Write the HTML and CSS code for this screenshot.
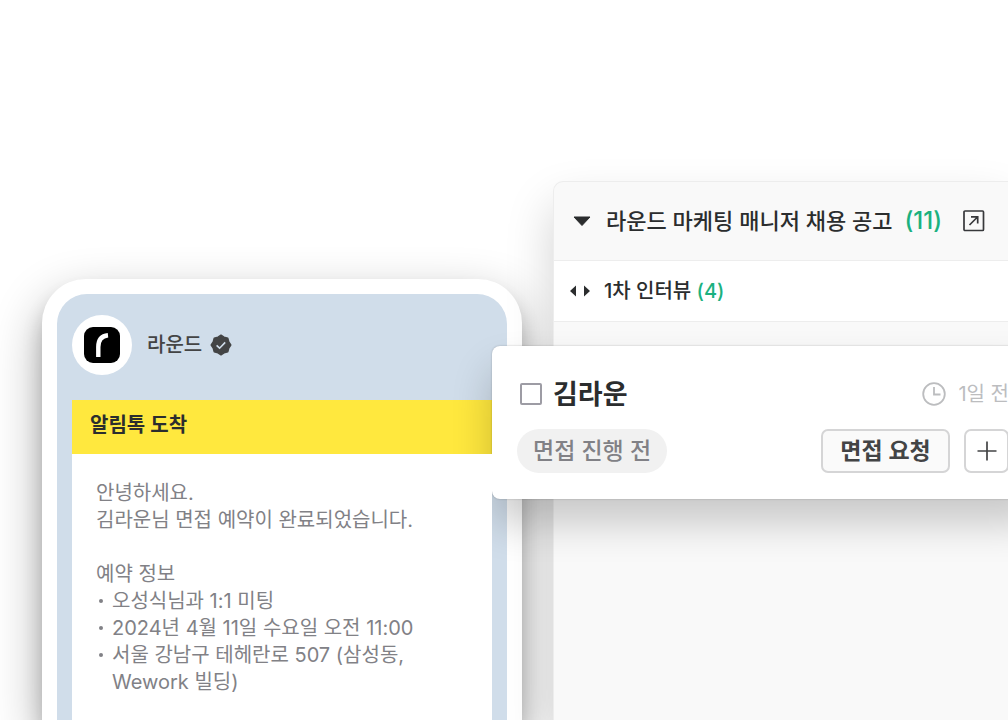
FILE: index.html
```
<!DOCTYPE html>
<html lang="ko">
<head>
  <meta charset="UTF-8" />
  <meta name="viewport" content="width=device-width, initial-scale=1.0" />
  <title>라운드</title>
  <link rel="stylesheet" href="styles.css">
</head>
<body>
  <main class="hero">
    <section class="phone">
      <div class="screen">
        <header class="profile">
          <span class="avatar">
            <svg width="36" height="36" viewBox="0 0 36 36" aria-hidden="true">
              <rect width="36" height="36" rx="9" fill="#000"/>
              <path d="M14.3 30V20C14.3 13 17.5 9 24 8.3" fill="none" stroke="#fff" stroke-width="4.4"/>
            </svg>
          </span>
          <span class="profile-name">라운드</span>
          <svg width="22" height="22" viewBox="0 0 22 22" aria-hidden="true">
            <path d="M11 1.2L14 3.2L17.8 4.2L18.8 8L20.8 11L18.8 14L17.8 17.8L14 18.8L11 20.8L8 18.8L4.2 17.8L3.2 14L1.2 11L3.2 8L4.2 4.2L8 3.2Z" fill="#434445" stroke="#434445" stroke-width="1.4" stroke-linejoin="round"/>
            <path d="M6.6 11.3L9.6 14.2L15.2 8.4" fill="none" stroke="#d0ddea" stroke-width="1.6"/>
          </svg>
        </header>
        <article class="message">
          <h2>알림톡 도착</h2>
          <div class="message-body">
            <p>안녕하세요.<br>김라운님 면접 예약이 완료되었습니다.</p>
            <p>예약 정보</p>
            <ul>
              <li>오성식님과 1:1 미팅</li>
              <li>2024년 4월 11일 수요일 오전 11:00</li>
              <li>서울 강남구 테헤란로 507 (삼성동,<br>Wework 빌딩)</li>
            </ul>
          </div>
        </article>
      </div>
    </section>

    <section class="board">
      <header class="board-title">
        <svg width="18" height="12" viewBox="0 0 18 12" aria-hidden="true">
          <path d="M1 2H17L9 10.5Z" fill="#2b2d2e" stroke="#2b2d2e" stroke-linejoin="round"/>
        </svg>
        <h1>라운드 마케팅 매니저 채용 공고 <span class="count">(11)</span></h1>
        <a href="#" aria-label="공고 열기">
          <svg width="22" height="22" viewBox="0 0 22 22" fill="none" stroke="#37383b" stroke-width="1.7">
            <rect x="1" y="1" width="19.5" height="19.5" rx="1"/>
            <path d="M6.5 15L14.5 7M8 6.8H14.7V13.5"/>
          </svg>
        </a>
      </header>
      <div class="stage">
        <svg width="20" height="12" viewBox="0 0 20 12" fill="#2b2d2e" aria-hidden="true">
          <path d="M0 6L6 0.5V11.5ZM20 6L14 0.5V11.5Z"/>
        </svg>
        <h2>1차 인터뷰 <span class="count">(4)</span></h2>
      </div>

      <article class="candidate">
        <div class="candidate-row">
          <input type="checkbox" id="candidate1">
          <label for="candidate1">김라운</label>
          <span class="time">
            <svg width="24" height="24" viewBox="0 0 24 24" fill="none" stroke="#bcbdbf" stroke-width="1.8" aria-hidden="true">
              <circle cx="12" cy="12" r="10.8"/>
              <path d="M12 5V12.5H18.5"/>
            </svg>
            1일 전
          </span>
        </div>
        <div class="candidate-row">
          <span class="status">면접 진행 전</span>
          <button type="button" class="request">면접 요청</button>
          <button type="button" class="add" aria-label="추가">
            <svg width="20" height="20" viewBox="0 0 20 20" fill="none" stroke="#434445" stroke-width="1.7">
              <path d="M10 0.5V19.5M0.5 10H19.5"/>
            </svg>
          </button>
        </div>
      </article>
    </section>
  </main>
</body>
</html>
```
FILE: styles.css
```
* {
  box-sizing: border-box;
}
body {
  margin: 0;
  background: #fff;
  color: #2b2d2e;
  font-family: Inter, "Noto Sans CJK KR", sans-serif;
}
h1, h2, p, ul {
  margin: 0;
  padding: 0;
}
svg {
  display: block;
  flex: none;
}
.hero {
  display: flex;
  gap: 31px;
  height: 100vh;
  padding-left: 42px;
  overflow: hidden;
}

/* phone */
.phone {
  flex: none;
  width: 480px;
  margin-top: 279px;
  padding: 15px 15px 0;
  background: #fff;
  border-radius: 44px 44px 0 0;
  box-shadow: 0 20px 50px rgba(0, 0, 0, 0.32), 0 16px 20px rgba(0, 0, 0, 0.18);
}
.screen {
  display: flex;
  flex-direction: column;
  height: 100%;
  padding: 21px 15px 0;
  background: #d0ddea;
  border-radius: 30px 30px 0 0;
}
.profile {
  display: flex;
  align-items: center;
  margin-bottom: 25px;
}
.avatar {
  display: flex;
  align-items: center;
  justify-content: center;
  width: 60px;
  height: 60px;
  margin-right: 15px;
  border-radius: 50%;
  background: #fff;
}
.profile-name {
  margin-right: 8px;
  font-size: 20px;
  line-height: 27px;
  font-weight: 500;
  color: #434445;
}
.message {
  display: flex;
  flex-direction: column;
  flex: 1;
}
.message h2 {
  padding: 12px 18px 15px;
  background: #ffe83e;
  font-size: 20px;
  line-height: 27px;
  font-weight: 600;
}
.message-body {
  position: relative;
  z-index: 2;
  flex: 1;
  padding: 26px 24px;
  background: #fff;
  color: #818186;
  font-size: 20px;
  line-height: 27px;
}
.message-body p + p {
  margin-top: 27px;
}
.message-body ul {
  list-style: none;
}
.message-body li {
  position: relative;
  padding-left: 16px;
}
.message-body li::before {
  content: "";
  position: absolute;
  left: 3px;
  top: 11px;
  width: 4px;
  height: 4px;
  border-radius: 50%;
  background: #818186;
}

/* board */
.board {
  position: relative;
  flex: 1;
  min-width: 0;
  margin-top: 181px;
  background: #f9f9f9;
  border: 1px solid #ededed;
  border-width: 1px 0 0 1px;
  border-radius: 10px 0 0 0;
  box-shadow: 0 24px 48px rgba(0, 0, 0, 0.18);
}
.board-title {
  display: flex;
  align-items: center;
  height: 79px;
  padding-left: 19px;
  border-bottom: 1px solid #ededed;
  white-space: nowrap;
}
.board-title h1 {
  margin: 0 21px 0 15px;
  font-size: 22px;
  line-height: 30px;
  font-weight: 500;
}
.board-title .count {
  margin-left: 6px;
  font-size: 24px;
}
.count {
  color: #1bb17f;
}
.stage {
  display: flex;
  align-items: center;
  height: 61px;
  padding-left: 16px;
  background: #fff;
  border-bottom: 1px solid #ededed;
}
.stage h2 {
  margin-left: 14px;
  font-size: 20px;
  line-height: 27px;
  font-weight: 500;
}

/* candidate card, lies over the phone and the board */
.candidate {
  position: absolute;
  top: 164px;
  left: -62px;
  right: -30px;
  z-index: 1;
  display: flex;
  flex-direction: column;
  gap: 15px;
  padding: 28px 29px 26px 25px;
  background: #fff;
  border-radius: 8px;
  box-shadow: 0 0 2px rgba(0, 0, 0, 0.25), 0 24px 40px rgba(0, 0, 0, 0.2);
}
.candidate-row {
  display: flex;
  align-items: center;
}
.candidate input {
  appearance: none;
  width: 22px;
  height: 22px;
  margin: 0 11px 0 3px;
  border: 2px solid #9d9ca4;
  border-radius: 2px;
}
.candidate label {
  padding-top: 2px;
  font-size: 27px;
  line-height: 38px;
  font-weight: 600;
}
.time {
  display: flex;
  align-items: center;
  gap: 12px;
  margin-left: auto;
  color: #bcbdbf;
  font-size: 20px;
  line-height: 27px;
}
.status {
  margin-right: auto;
  padding: 0 16px;
  border-radius: 22px;
  background: #f1f1f1;
  color: #818186;
  font-size: 23px;
  line-height: 44px;
  font-weight: 500;
}
.candidate button {
  display: flex;
  align-items: center;
  justify-content: center;
  height: 44px;
  padding: 0;
  border: 2px solid #d5d5d6;
  border-radius: 7px;
  background: #fff;
  color: #434445;
}
.candidate .request {
  width: 129px;
  margin-right: 14px;
  background: #fafafa;
  font-family: inherit;
  font-size: 23px;
  line-height: 38px;
  font-weight: 600;
}
.candidate .add {
  width: 45px;
}
```
